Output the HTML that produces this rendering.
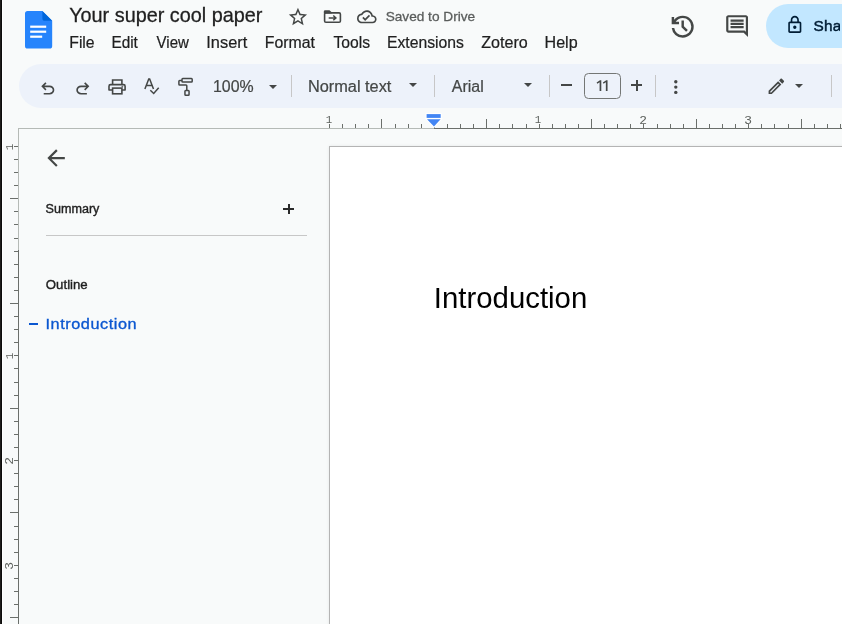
<!DOCTYPE html>
<html>
<head>
<meta charset="utf-8">
<title>Your super cool paper - Google Docs</title>
<style>
html,body{margin:0;padding:0;}
body{width:842px;height:624px;overflow:hidden;background:#f8fafa;font-family:"Liberation Sans",sans-serif;position:relative;}
.abs{position:absolute;}
.t{position:absolute;white-space:nowrap;line-height:1;}
#app{position:absolute;left:0;top:0;width:842px;height:624px;overflow:hidden;will-change:transform;}
svg{position:absolute;overflow:visible;}
.sep{position:absolute;width:1px;background:#c7c7c7;top:75px;height:22px;}
.tri{position:absolute;width:0;height:0;border-left:4.3px solid transparent;border-right:4.3px solid transparent;border-top:4.3px solid #444746;}
</style>
</head>
<body>
<div id="app">
<!-- window edge -->
<div class="abs" style="left:0;top:0;width:1px;height:624px;background:#1d1c1a"></div>
<div class="abs" style="left:1px;top:0;width:1px;height:624px;background:#0b0b0a"></div>
<div class="abs" style="left:2px;top:0;width:1px;height:624px;background:#ffffff"></div>

<!-- docs logo -->
<svg style="left:25.2px;top:10.6px" width="27.2" height="37.6" viewBox="0 0 27.2 37.6">
  <path d="M2.6 0 H17.4 L27.2 9.8 V35 a2.6 2.6 0 0 1 -2.6 2.6 H2.6 a2.6 2.6 0 0 1 -2.6 -2.6 V2.6 a2.6 2.6 0 0 1 2.6 -2.6 Z" fill="#2684fc"/>
  <path d="M17.4 0 L27.2 9.8 H20 a2.6 2.6 0 0 1 -2.6 -2.6 Z" fill="#0066da"/>
  <rect x="5.2" y="14.6" width="16" height="2.2" fill="#fff"/>
  <rect x="5.2" y="19.600" width="16" height="2.2" fill="#fff"/>
  <rect x="5.2" y="24.6" width="12" height="2.2" fill="#fff"/>
</svg>

<!-- title-row icons -->
<svg style="left:286.55px;top:5.7px" width="21.9" height="21.9" viewBox="0 0 24 24"><path fill="#444746" d="M22 9.24l-7.19-.62L12 2 9.190 8.630 2 9.240l5.460 4.730L5.820 21 12 17.270 18.180 21l-1.630-7.030L22 9.240zM12 15.400l-3.760 2.270 1-4.280-3.320-2.880 4.380-.380L12 6.100l1.710 4.040 4.380.380-3.320 2.880 1 4.280L12 15.400z"/></svg>
<svg style="left:357.2px;top:6.7px" width="19.6" height="19.6" viewBox="0 0 24 24"><path fill="#444746" d="M19.350 10.040C18.670 6.590 15.640 4 12 4 9.110 4 6.600 5.640 5.350 8.040 2.340 8.360 0 10.910 0 14c0 3.310 2.690 6 6 6h13c2.760 0 5-2.240 5-5 0-2.640-2.050-4.780-4.650-4.960zM19 18H6c-2.210 0-4-1.790-4-4 0-2.050 1.530-3.760 3.560-3.970l1.070-.11.5-.95C8.080 7.140 9.940 6 12 6c2.620 0 4.880 1.860 5.390 4.430l.3 1.500 1.530.11c1.560.1 2.780 1.410 2.780 2.960 0 1.650-1.350 3-3 3zm-9-3.820l-2.090-2.090L6.500 13.500 10 17l6.010-6.010-1.410-1.410z"/></svg>

<!-- history -->
<svg style="left:668px;top:11.9px" width="29.4" height="29.4" viewBox="0 0 24 24"><path fill="#444746" d="M12 21q-3.450 0-6.012-2.287T3.050 13H5.100q.35 2.600 2.313 4.300T12 19q2.925 0 4.963-2.037T19 12q0-2.925-2.037-4.962T12 5q-1.725 0-3.225.8T6.250 8H9v2H3V4h2v2.350q1.275-1.600 3.113-2.475T12 3q1.875 0 3.513.712t2.850 1.925q1.212 1.213 1.925 2.850T21 12q0 1.875-.712 3.513t-1.925 2.850q-1.213 1.212-2.850 1.925T12 21Zm2.800-4.800L11 12.400V7h2v4.600l3.200 3.200-1.400 1.400Z"/></svg>
<!-- comment -->
<svg style="left:723.5px;top:12.8px" width="26.2" height="26.2" viewBox="0 0 24 24"><path fill="#444746" d="M21.990 4c0-1.100-.89-2-1.990-2H4c-1.100 0-2 .9-2 2v12c0 1.100.9 2 2 2h14l4 4-.01-18zM20 4v13.170L18.830 16H4V4h16zM6 12h12v2H6zm0-3h12v2H6zm0-3h12v2H6z"/></svg>

<!-- share button -->
<div class="abs" style="left:766px;top:4px;width:120px;height:44px;border-radius:22px;background:#c2e7ff"></div>
<svg style="left:784.5px;top:15.1px" width="19.6" height="19.6" viewBox="0 0 24 24"><path fill="#001d35" d="M18 8h-1V6c0-2.760-2.240-5-5-5S7 3.240 7 6v2H6c-1.100 0-2 .9-2 2v10c0 1.100.9 2 2 2h12c1.100 0 2-.9 2-2V10c0-1.100-.9-2-2-2zM9 6c0-1.660 1.340-3 3-3s3 1.340 3 3v2H9V6zm9 14H6V10h12v10zm-6-3c1.100 0 2-.9 2-2s-.9-2-2-2-2 .9-2 2 .9 2 2 2z"/></svg>

<!-- toolbar pill -->
<div class="abs" style="left:19px;top:64px;width:900px;height:44px;border-radius:22px;background:#edf2fa"></div>

<!-- toolbar icons -->
<svg style="left:38.1px;top:78.9px" width="19.6" height="19.6" viewBox="0 0 24 24"><path fill="#444746" d="M7 19v-2h7.100q1.575 0 2.738-1T18 13.500q0-1.500-1.162-2.500T14.100 10H7.800l2.600 2.600L9 14 4 9l5-5 1.400 1.400L7.800 8h6.300q2.425 0 4.163 1.575T20 13.500q0 2.350-1.737 3.925T14.100 19H7Z"/></svg>
<svg style="left:72.5px;top:78.9px" width="19.6" height="19.6" viewBox="0 0 24 24"><path fill="#444746" d="M9.900 19q-2.425 0-4.163-1.575T4 13.500q0-2.350 1.737-3.925T9.900 8h6.300l-2.600-2.600L15 4l5 5-5 5-1.400-1.400 2.600-2.600H9.900q-1.575 0-2.738 1T6 13.500q0 1.500 1.162 2.500T9.900 17H17v2H9.900Z"/></svg>

<svg style="left:0;top:0" width="842" height="624" viewBox="0 0 842 624" fill="none" stroke="#444746" stroke-width="1.6" stroke-linejoin="round">
  <!-- move-to-folder -->
  <rect x="324.6" y="12.9" width="15.8" height="9.3" rx="1.3"/>
  <path d="M323.8 13.4 V11.6 a1.400 1.400 0 0 1 1.400-1.400 H329.500 L331.700 12.300 V13.400 Z" fill="#444746" stroke="none"/>
  <path d="M328.700 17.900 H335.600 M333.300 15.500 L335.900 17.900 L333.300 20.300" stroke-width="1.500" stroke-linejoin="miter"/>
  <!-- print -->
  <path d="M112.6 84 V80 H121.9 V84" stroke-linejoin="miter"/>
  <path d="M112.6 90 H109 V86.2 a1.600 1.600 0 0 1 1.600-1.600 H123.5 a1.600 1.600 0 0 1 1.600 1.600 V90 H121.9"/>
  <rect x="112.6" y="88.1" width="9.3" height="5.7" stroke-linejoin="miter"/>
  <circle cx="122.3" cy="86.700" r="0.45" stroke-width="0.9"/>
  <!-- spellcheck -->
  <path d="M144.9 88.9 L148.75 78.9 H149.65 L153.5 88.9 M146.2 85.5 H152.2" stroke-width="1.5" stroke-linejoin="miter"/>
  <path d="M150.3 90.300 L153.700 93.500 L158.700 87.800" stroke-width="1.500" stroke-linejoin="miter"/>
  <!-- font size digits "11" -->
  <path d="M601.3 80.2 V90.9 H599.6 V82.2 L597.3 83.7 L596.6 82.400 L600.000 80.200 Z" fill="#444746" stroke="none"/>
  <path d="M607.550 80.2 V90.9 H605.850 V82.2 L603.550 83.7 L602.850 82.400 L606.250 80.200 Z" fill="#444746" stroke="none"/>
  <!-- paint format -->
  <rect x="182" y="78.6" width="10.2" height="3.500" rx="0.8" stroke-width="1.500"/>
  <path d="M182 80.400 H179.700 a0.800 0.800 0 0 0 -0.800 0.800 V84.200 a0.800 0.800 0 0 0 0.800 0.800 H186 a0.800 0.800 0 0 1 0.800 0.800 V90.400" stroke-width="1.500"/>
  <rect x="184.950" y="90.500" width="4.100" height="4.700" rx="0.800" stroke-width="1.500"/>
</svg>
<div class="tri" style="left:268.6px;top:84.8px"></div>
<div class="sep" style="left:291px"></div>
<div class="tri" style="left:408.8px;top:83.1px"></div>
<div class="sep" style="left:434px"></div>
<div class="tri" style="left:523.8px;top:83.1px"></div>
<div class="sep" style="left:549px"></div>
<!-- minus -->
<div class="abs" style="left:561.3px;top:84.4px;width:11.1px;height:1.7px;background:#444746"></div>
<!-- font size box -->
<div class="abs" style="left:584px;top:73.3px;width:35px;height:23.5px;border:1px solid #747775;border-radius:4.5px"></div>
<!-- plus -->
<div class="abs" style="left:631.2px;top:84.4px;width:11.2px;height:1.7px;background:#444746"></div>
<div class="abs" style="left:635.95px;top:79.6px;width:1.7px;height:11.5px;background:#444746"></div>
<div class="sep" style="left:655px"></div>
<!-- more vert -->
<svg style="left:674.4px;top:79.6px" width="3.6" height="14.2" viewBox="0 0 3.6 14.2"><circle cx="1.8" cy="1.8" r="1.7" fill="#444746"/><circle cx="1.8" cy="7.1" r="1.7" fill="#444746"/><circle cx="1.8" cy="12.4" r="1.700" fill="#444746"/></svg>
<!-- pencil -->
<svg style="left:766.2px;top:75.9px" width="20.7" height="20.7" viewBox="0 0 24 24"><path fill="#444746" d="M14.060 9.020l.92.92L5.920 19H5v-.92l9.060-9.060M17.660 3c-.25 0-.51.1-.7.290l-1.830 1.830 3.750 3.750 1.830-1.830c.39-.39.39-1.020 0-1.410l-2.340-2.340c-.2-.2-.45-.29-.71-.29zm-3.600 3.190L3 17.250V21h3.750L17.810 9.940l-3.750-3.750z"/></svg>
<div class="tri" style="left:794.7px;top:83.6px"></div>
<div class="sep" style="left:831px"></div>

<!-- rulers -->
<div class="abs" style="left:18px;top:128px;width:416px;height:1px;background:#b5bab6"></div>
<div class="abs" style="left:434px;top:128px;width:408px;height:1px;background:#6b6f6b"></div>
<div class="abs" style="left:18px;top:128px;width:1px;height:122px;background:#b5bab6"></div>
<div class="abs" style="left:18px;top:250px;width:1px;height:374px;background:#6b6f6b"></div>
<div class="abs" style="left:329px;top:124px;width:1px;height:4px;background:#6b6f6b"></div>
<div class="t" style="left:318.60px;top:112.80px;width:20px;height:14px;line-height:14px;text-align:center;font-family:'Liberation Mono',monospace;font-size:11.6px;color:#5c605c;transform:scaleX(0.93)">1</div>
<div class="abs" style="left:342px;top:124px;width:1px;height:4px;background:#6b6f6b"></div>
<div class="abs" style="left:355px;top:124px;width:1px;height:4px;background:#6b6f6b"></div>
<div class="abs" style="left:368px;top:124px;width:1px;height:4px;background:#6b6f6b"></div>
<div class="abs" style="left:381px;top:119px;width:1px;height:9px;background:#6b6f6b"></div>
<div class="abs" style="left:395px;top:124px;width:1px;height:4px;background:#6b6f6b"></div>
<div class="abs" style="left:408px;top:124px;width:1px;height:4px;background:#6b6f6b"></div>
<div class="abs" style="left:421px;top:124px;width:1px;height:4px;background:#6b6f6b"></div>
<div class="abs" style="left:434px;top:124px;width:1px;height:4px;background:#6b6f6b"></div>
<div class="abs" style="left:447px;top:124px;width:1px;height:4px;background:#6b6f6b"></div>
<div class="abs" style="left:460px;top:124px;width:1px;height:4px;background:#6b6f6b"></div>
<div class="abs" style="left:473px;top:124px;width:1px;height:4px;background:#6b6f6b"></div>
<div class="abs" style="left:486px;top:119px;width:1px;height:9px;background:#6b6f6b"></div>
<div class="abs" style="left:499px;top:124px;width:1px;height:4px;background:#6b6f6b"></div>
<div class="abs" style="left:512px;top:124px;width:1px;height:4px;background:#6b6f6b"></div>
<div class="abs" style="left:526px;top:124px;width:1px;height:4px;background:#6b6f6b"></div>
<div class="abs" style="left:539px;top:124px;width:1px;height:4px;background:#6b6f6b"></div>
<div class="t" style="left:528.20px;top:112.80px;width:20px;height:14px;line-height:14px;text-align:center;font-family:'Liberation Mono',monospace;font-size:11.6px;color:#5c605c;transform:scaleX(0.93)">1</div>
<div class="abs" style="left:552px;top:124px;width:1px;height:4px;background:#6b6f6b"></div>
<div class="abs" style="left:565px;top:124px;width:1px;height:4px;background:#6b6f6b"></div>
<div class="abs" style="left:578px;top:124px;width:1px;height:4px;background:#6b6f6b"></div>
<div class="abs" style="left:591px;top:119px;width:1px;height:9px;background:#6b6f6b"></div>
<div class="abs" style="left:604px;top:124px;width:1px;height:4px;background:#6b6f6b"></div>
<div class="abs" style="left:617px;top:124px;width:1px;height:4px;background:#6b6f6b"></div>
<div class="abs" style="left:630px;top:124px;width:1px;height:4px;background:#6b6f6b"></div>
<div class="abs" style="left:643px;top:124px;width:1px;height:4px;background:#6b6f6b"></div>
<div class="t" style="left:633.00px;top:112.70px;width:20px;height:14px;line-height:14px;text-align:center;font-family:'Liberation Sans',sans-serif;font-size:11.4px;color:#5c605c;transform:scaleX(1.14)">2</div>
<div class="abs" style="left:657px;top:124px;width:1px;height:4px;background:#6b6f6b"></div>
<div class="abs" style="left:670px;top:124px;width:1px;height:4px;background:#6b6f6b"></div>
<div class="abs" style="left:683px;top:124px;width:1px;height:4px;background:#6b6f6b"></div>
<div class="abs" style="left:696px;top:119px;width:1px;height:9px;background:#6b6f6b"></div>
<div class="abs" style="left:709px;top:124px;width:1px;height:4px;background:#6b6f6b"></div>
<div class="abs" style="left:722px;top:124px;width:1px;height:4px;background:#6b6f6b"></div>
<div class="abs" style="left:735px;top:124px;width:1px;height:4px;background:#6b6f6b"></div>
<div class="abs" style="left:748px;top:124px;width:1px;height:4px;background:#6b6f6b"></div>
<div class="t" style="left:737.80px;top:112.70px;width:20px;height:14px;line-height:14px;text-align:center;font-family:'Liberation Sans',sans-serif;font-size:11.4px;color:#5c605c;transform:scaleX(1.14)">3</div>
<div class="abs" style="left:761px;top:124px;width:1px;height:4px;background:#6b6f6b"></div>
<div class="abs" style="left:774px;top:124px;width:1px;height:4px;background:#6b6f6b"></div>
<div class="abs" style="left:788px;top:124px;width:1px;height:4px;background:#6b6f6b"></div>
<div class="abs" style="left:801px;top:119px;width:1px;height:9px;background:#6b6f6b"></div>
<div class="abs" style="left:814px;top:124px;width:1px;height:4px;background:#6b6f6b"></div>
<div class="abs" style="left:827px;top:124px;width:1px;height:4px;background:#6b6f6b"></div>
<div class="abs" style="left:840px;top:124px;width:1px;height:4px;background:#6b6f6b"></div>
<div class="abs" style="left:14px;top:146px;width:4px;height:1px;background:#6b6f6b"></div>
<div class="t" style="left:-0.50px;top:139.80px;width:20px;height:14px;line-height:14px;text-align:center;font-family:'Liberation Mono',monospace;font-size:11.6px;color:#5c605c;transform:rotate(-90deg) scaleX(0.93)">1</div>
<div class="abs" style="left:14px;top:159px;width:4px;height:1px;background:#6b6f6b"></div>
<div class="abs" style="left:14px;top:172px;width:4px;height:1px;background:#6b6f6b"></div>
<div class="abs" style="left:14px;top:185px;width:4px;height:1px;background:#6b6f6b"></div>
<div class="abs" style="left:10px;top:198px;width:8px;height:1px;background:#6b6f6b"></div>
<div class="abs" style="left:14px;top:211px;width:4px;height:1px;background:#6b6f6b"></div>
<div class="abs" style="left:14px;top:224px;width:4px;height:1px;background:#6b6f6b"></div>
<div class="abs" style="left:14px;top:238px;width:4px;height:1px;background:#6b6f6b"></div>
<div class="abs" style="left:14px;top:251px;width:4px;height:1px;background:#6b6f6b"></div>
<div class="abs" style="left:14px;top:264px;width:4px;height:1px;background:#6b6f6b"></div>
<div class="abs" style="left:14px;top:277px;width:4px;height:1px;background:#6b6f6b"></div>
<div class="abs" style="left:14px;top:290px;width:4px;height:1px;background:#6b6f6b"></div>
<div class="abs" style="left:10px;top:303px;width:8px;height:1px;background:#6b6f6b"></div>
<div class="abs" style="left:14px;top:316px;width:4px;height:1px;background:#6b6f6b"></div>
<div class="abs" style="left:14px;top:329px;width:4px;height:1px;background:#6b6f6b"></div>
<div class="abs" style="left:14px;top:342px;width:4px;height:1px;background:#6b6f6b"></div>
<div class="abs" style="left:14px;top:355px;width:4px;height:1px;background:#6b6f6b"></div>
<div class="t" style="left:-0.50px;top:349.24px;width:20px;height:14px;line-height:14px;text-align:center;font-family:'Liberation Mono',monospace;font-size:11.6px;color:#5c605c;transform:rotate(-90deg) scaleX(0.93)">1</div>
<div class="abs" style="left:14px;top:368px;width:4px;height:1px;background:#6b6f6b"></div>
<div class="abs" style="left:14px;top:382px;width:4px;height:1px;background:#6b6f6b"></div>
<div class="abs" style="left:14px;top:395px;width:4px;height:1px;background:#6b6f6b"></div>
<div class="abs" style="left:10px;top:408px;width:8px;height:1px;background:#6b6f6b"></div>
<div class="abs" style="left:14px;top:421px;width:4px;height:1px;background:#6b6f6b"></div>
<div class="abs" style="left:14px;top:434px;width:4px;height:1px;background:#6b6f6b"></div>
<div class="abs" style="left:14px;top:447px;width:4px;height:1px;background:#6b6f6b"></div>
<div class="abs" style="left:14px;top:460px;width:4px;height:1px;background:#6b6f6b"></div>
<div class="t" style="left:-1.00px;top:453.96px;width:20px;height:14px;line-height:14px;text-align:center;font-family:'Liberation Sans',sans-serif;font-size:11.4px;color:#5c605c;transform:rotate(-90deg) scaleX(1.14)">2</div>
<div class="abs" style="left:14px;top:473px;width:4px;height:1px;background:#6b6f6b"></div>
<div class="abs" style="left:14px;top:486px;width:4px;height:1px;background:#6b6f6b"></div>
<div class="abs" style="left:14px;top:499px;width:4px;height:1px;background:#6b6f6b"></div>
<div class="abs" style="left:10px;top:512px;width:8px;height:1px;background:#6b6f6b"></div>
<div class="abs" style="left:14px;top:526px;width:4px;height:1px;background:#6b6f6b"></div>
<div class="abs" style="left:14px;top:539px;width:4px;height:1px;background:#6b6f6b"></div>
<div class="abs" style="left:14px;top:552px;width:4px;height:1px;background:#6b6f6b"></div>
<div class="abs" style="left:14px;top:565px;width:4px;height:1px;background:#6b6f6b"></div>
<div class="t" style="left:-1.00px;top:558.68px;width:20px;height:14px;line-height:14px;text-align:center;font-family:'Liberation Sans',sans-serif;font-size:11.4px;color:#5c605c;transform:rotate(-90deg) scaleX(1.14)">3</div>
<div class="abs" style="left:14px;top:578px;width:4px;height:1px;background:#6b6f6b"></div>
<div class="abs" style="left:14px;top:591px;width:4px;height:1px;background:#6b6f6b"></div>
<div class="abs" style="left:14px;top:604px;width:4px;height:1px;background:#6b6f6b"></div>
<div class="abs" style="left:10px;top:617px;width:8px;height:1px;background:#6b6f6b"></div>
<svg style="left:424.4px;top:112px" width="20" height="18" viewBox="424.4 112 20 18"><g stroke="#ffffff" stroke-width="2" stroke-linejoin="miter" fill="#ffffff"><rect x="427" y="114.1" width="14.1" height="3.8"/><path d="M427.400 119.200 H441 L434.400 126.600 Z"/></g><rect x="427" y="114.100" width="14.1" height="3.800" fill="#4285f4"/><path d="M427.400 119.200 H441 L434.400 126.600 Z" fill="#4285f4"/></svg>

<!-- left panel -->
<svg style="left:43.2px;top:145.2px" width="26.2" height="26.2" viewBox="0 0 24 24"><path fill="#444746" d="M20 11H7.830l5.590-5.590L12 4l-8 8 8 8 1.410-1.410L7.830 13H20v-2z"/></svg>
<div class="abs" style="left:283.4px;top:208.3px;width:10.8px;height:1.7px;background:#2a2a2a"></div>
<div class="abs" style="left:287.95px;top:203.8px;width:1.7px;height:10.7px;background:#2a2a2a"></div>
<div class="abs" style="left:46px;top:235px;width:261px;height:1px;background:#c7c7c7"></div>
<div class="abs" style="left:29.4px;top:322.6px;width:8.9px;height:2.2px;background:#0b57d0"></div>

<!-- page -->
<div class="abs" style="left:329px;top:146px;width:600px;height:600px;background:#fff;border:1px solid #b4b4b4;box-shadow:0 0 3px rgba(0,0,0,0.08)"></div>

<!-- text -->
<div class="t" style="left:69px;top:6.0px;font-size:19.8px;color:#1f1f1f;transform:translateX(0.15px) scaleX(1.0025);transform-origin:0 0;-webkit-text-stroke:0.28px #1f1f1f;">Your super cool paper</div>
<div class="t" style="left:69px;top:35.0px;font-size:15.6px;color:#1f1f1f;transform:translateX(0.26px) scaleX(1.0095);transform-origin:0 0;-webkit-text-stroke:0.22px #1f1f1f;">File</div>
<div class="t" style="left:111px;top:35.0px;font-size:15.6px;color:#1f1f1f;transform:translateX(0.40px) scaleX(0.9857);transform-origin:0 0;-webkit-text-stroke:0.22px #1f1f1f;">Edit</div>
<div class="t" style="left:156px;top:35.0px;font-size:15.6px;color:#1f1f1f;transform:translateX(0.62px) scaleX(0.9638);transform-origin:0 0;-webkit-text-stroke:0.22px #1f1f1f;">View</div>
<div class="t" style="left:206px;top:35.0px;font-size:15.6px;color:#1f1f1f;transform:translateX(0.33px) scaleX(1.0488);transform-origin:0 0;-webkit-text-stroke:0.22px #1f1f1f;">Insert</div>
<div class="t" style="left:264px;top:35.0px;font-size:15.6px;color:#1f1f1f;transform:translateX(0.83px) scaleX(1.0161);transform-origin:0 0;-webkit-text-stroke:0.22px #1f1f1f;">Format</div>
<div class="t" style="left:333px;top:35.0px;font-size:15.6px;color:#1f1f1f;transform:translateX(0.39px) scaleX(1.0049);transform-origin:0 0;-webkit-text-stroke:0.22px #1f1f1f;">Tools</div>
<div class="t" style="left:386px;top:35.0px;font-size:15.6px;color:#1f1f1f;transform:translateX(0.94px) scaleX(1.0091);transform-origin:0 0;-webkit-text-stroke:0.22px #1f1f1f;">Extensions</div>
<div class="t" style="left:481px;top:35.0px;font-size:15.6px;color:#1f1f1f;transform:translateX(0.30px) scaleX(1.0310);transform-origin:0 0;-webkit-text-stroke:0.22px #1f1f1f;">Zotero</div>
<div class="t" style="left:544px;top:35.0px;font-size:15.6px;color:#1f1f1f;transform:translateX(0.52px) scaleX(1.0320);transform-origin:0 0;-webkit-text-stroke:0.22px #1f1f1f;">Help</div>
<div class="t" style="left:385px;top:10.0px;font-size:13.1px;color:#5a5d5c;transform:translateX(0.66px) scaleX(1.0416);transform-origin:0 0;-webkit-text-stroke:0.29px #5a5d5c;">Saved to Drive</div>
<div class="t" style="left:813.53px;top:18.0px;font-size:15.4px;color:#001d35;letter-spacing:0.250px;width:26.8px;overflow:hidden;-webkit-text-stroke:0.46px #001d35;">Share</div>
<div class="t" style="left:213px;top:79.0px;font-size:16.0px;color:#444746;transform:translateX(0.01px) scaleX(0.9928);transform-origin:0 0;-webkit-text-stroke:0.22px #444746;">100%</div>
<div class="t" style="left:307px;top:79.0px;font-size:16.0px;color:#444746;transform:translateX(0.88px) scaleX(1.0208);transform-origin:0 0;-webkit-text-stroke:0.22px #444746;">Normal text</div>
<div class="t" style="left:451px;top:79.0px;font-size:16.0px;color:#444746;transform:translateX(0.83px) scaleX(0.9963);transform-origin:0 0;-webkit-text-stroke:0.22px #444746;">Arial</div>
<div class="t" style="left:45px;top:203.0px;font-size:12.5px;color:#1f1f1f;transform:translateX(0.49px) scaleX(1.0080);transform-origin:0 0;-webkit-text-stroke:0.38px #1f1f1f;">Summary</div>
<div class="t" style="left:45px;top:279.0px;font-size:12.8px;color:#1f1f1f;transform:translateX(0.85px) scaleX(1.0315);transform-origin:0 0;-webkit-text-stroke:0.38px #1f1f1f;">Outline</div>
<div class="t" style="left:45px;top:317.0px;font-size:14.8px;color:#0b57d0;transform:translateX(0.51px) scaleX(1.1000);transform-origin:0 0;letter-spacing:0.499px;-webkit-text-stroke:0.33px #0b57d0;">Introduction</div>
<div class="t" style="left:433px;top:284.0px;font-size:29.1px;color:#000000;transform:translateX(0.82px) scaleX(1.0090);transform-origin:0 0;">Introduction</div>
</div>
</body>
</html>
